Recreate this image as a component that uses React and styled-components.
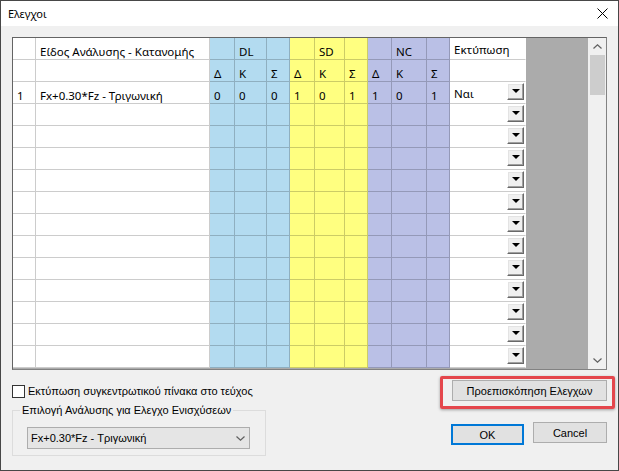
import React from "react";
import styled, { createGlobalStyle } from "styled-components";

const GlobalStyle = createGlobalStyle`
  * { box-sizing: border-box; }
  html, body { margin: 0; padding: 0; background: #f0f0f0; }
  body { font-family: "Liberation Sans", Arial, sans-serif; }
`;

const BLUE = "#b3dbf0";
const YELLOW = "#ffff80";
const LAV = "#bac0e6";
const WHITE = "#ffffff";

const columns = [
  { w: 23, bg: WHITE },
  { w: 174, bg: WHITE },
  { w: 25, bg: BLUE },
  { w: 32, bg: BLUE },
  { w: 23, bg: BLUE },
  { w: 25, bg: YELLOW },
  { w: 30, bg: YELLOW },
  { w: 23, bg: YELLOW },
  { w: 24, bg: LAV },
  { w: 35, bg: LAV },
  { w: 23, bg: LAV },
  { w: 76, bg: WHITE },
];

const header1 = ["", "Είδος Ανάλυσης - Κατανομής", "", "DL", "", "", "SD", "", "", "NC", "", "Εκτύπωση"];
const header2 = ["", "", "Δ", "Κ", "Σ", "Δ", "Κ", "Σ", "Δ", "Κ", "Σ", ""];

const dataRows = [
  { n: "1", name: "Fx+0.30*Fz - Τριγωνική", vals: ["0", "0", "0", "1", "0", "1", "1", "0", "1"], print: "Ναι" },
  ...Array.from({ length: 12 }, () => ({ n: "", name: "", vals: Array(9).fill(""), print: "" })),
];

const Dialog = styled.div`
  width: 619px;
  height: 471px;
  border: 1px solid #474747;
  background: #f0f0f0;
  display: flex;
  flex-direction: column;
  overflow: hidden;
`;

const TitleBar = styled.div`
  height: 25px;
  flex: none;
  background: #ffffff;
  display: flex;
  align-items: center;
  justify-content: space-between;
  padding: 0 10px 0 7px;
`;

const Title = styled.span`
  font-family: "Noto Sans", "Open Sans", sans-serif;
  font-size: 11px;
  letter-spacing: -0.1px;
  color: #000;
`;

const CloseIcon = styled.svg`
  width: 11px;
  height: 11px;
  display: block;
`;

const Body = styled.div`
  flex: 1;
  display: flex;
  flex-direction: column;
  padding: 11px 11px 0 11px;
`;

const GridFrame = styled.div`
  height: 333px;
  flex: none;
  display: flex;
  border: 1px solid #828282;
  border-top-color: #646464;
  border-left-color: #646464;
  background: #ababab;
`;

const Table = styled.div`
  width: 513px;
  align-self: flex-start;
  display: grid;
  grid-template-columns: ${(p) => p.$cols};
  grid-auto-rows: 22px;
  font-family: "Noto Sans", "Open Sans", sans-serif;
  font-size: 11.5px;
  color: #000;
`;

const Cell = styled.div`
  background: ${(p) => p.$bg};
  border-right: 1px solid rgba(0, 0, 0, 0.2);
  border-bottom: 1px solid rgba(0, 0, 0, 0.2);
  border-right-color: ${(p) => (p.$last ? "transparent" : "rgba(0, 0, 0, 0.2)")};
  display: flex;
  align-items: center;
  padding: 5px 0 0 4px;
  white-space: nowrap;
  overflow: hidden;
`;

const PrintCell = styled(Cell)`
  justify-content: space-between;
  align-items: flex-start;
  padding: 0 1px 0 4px;
`;

const PrintText = styled.span`
  margin-top: 4px;
  line-height: 16px;
`;

const DropButton = styled.div`
  width: 17px;
  height: 17px;
  margin-top: 1px;
  background: #f0f0f0;
  border-top: 1px solid #ffffff;
  border-left: 1px solid #ffffff;
  border-right: 1px solid #696969;
  border-bottom: 1px solid #696969;
  box-shadow: inset -1px -1px 0 #a0a0a0, inset 1px 1px 0 #e3e3e3;
  display: flex;
  align-items: center;
  justify-content: center;
  padding-bottom: 1px;
`;

const Triangle = styled.div`
  width: 0;
  height: 0;
  border-left: 4px solid transparent;
  border-right: 4px solid transparent;
  border-top: 4px solid #000;
`;

const Workspace = styled.div`
  flex: 1;
  background: #ababab;
`;

const VScroll = styled.div`
  width: 18px;
  flex: none;
  background: #f0f0f0;
  display: flex;
  flex-direction: column;
`;

const ScrollArrow = styled.div`
  height: 17px;
  flex: none;
  display: flex;
  align-items: center;
  justify-content: center;
`;

const Track = styled.div`
  flex: 1;
  display: flex;
  flex-direction: column;
`;

const Thumb = styled.div`
  height: 40px;
  margin: 0 1px 0 2px;
  background: #cdcdcd;
`;

const Footer = styled.div`
  display: flex;
  justify-content: space-between;
  align-items: flex-start;
  font-family: "Liberation Sans", Arial, sans-serif;
  font-size: 11px;
  color: #000;
`;

const LeftCol = styled.div`
  width: 254px;
  display: flex;
  flex-direction: column;
`;

const CheckRow = styled.label`
  display: flex;
  align-items: center;
  margin-top: 15px;
  height: 13px;
`;

const CheckBox = styled.span`
  width: 13px;
  height: 13px;
  border: 1px solid #333333;
  background: #ffffff;
  flex: none;
`;

const CheckLabel = styled.span`
  margin-left: 3px;
  line-height: 13px;
`;

const Group = styled.fieldset`
  margin: 6px 0 0 0;
  padding: 0 15px 6px 14px;
  border: 1px solid #dcdcdc;
  min-width: 0;
`;

const Legend = styled.legend`
  padding: 0 2px;
  margin-left: -7px;
  line-height: 13px;
  font-size: 11px;
`;

const Combo = styled.div`
  margin-top: 10px;
  height: 22px;
  width: 100%;
  border: 1px solid #adadad;
  background: #e5e5e5;
  display: flex;
  align-items: center;
  justify-content: space-between;
  padding: 0 4px 0 3px;
`;

const RightCol = styled.div`
  width: 156px;
  display: flex;
  flex-direction: column;
  align-items: flex-end;
`;

const Highlight = styled.div`
  position: relative;
  margin-top: 10px;
`;

const RedMark = styled.div`
  position: absolute;
  left: -12px;
  top: -4px;
  right: -8px;
  bottom: -8px;
  border: 3px solid #e4464c;
  border-radius: 2px;
  box-shadow: 0 1px 3px rgba(0, 0, 0, 0.35);
  pointer-events: none;
`;

const Button = styled.div`
  width: ${(p) => p.$w}px;
  height: 21px;
  margin-top: ${(p) => p.$mt || 0}px;
  background: #e1e1e1;
  border: ${(p) => (p.$primary ? "2px solid #0078d7" : "1px solid #adadad")};
  display: flex;
  align-items: center;
  justify-content: center;
  font-family: "Liberation Sans", Arial, sans-serif;
  font-size: 11px;
  color: #000;
`;

const ButtonRow = styled.div`
  display: flex;
  align-items: flex-start;
  gap: 9px;
  margin-top: 21px;
`;

const Chevron = ({ up }) => (
  <svg width="9" height="5" viewBox="0 0 9 5" style={{ display: "block" }}>
    <polyline
      points={up ? "0.5,4.5 4.5,0.8 8.5,4.5" : "0.5,0.5 4.5,4.2 8.5,0.5"}
      fill="none"
      stroke="#606060"
      strokeWidth="1.2"
    />
  </svg>
);

const renderRow = (cells, key, withDrop) =>
  cells.map((txt, i) => {
    const col = columns[i];
    if (i === columns.length - 1) {
      return (
        <PrintCell key={`${key}-${i}`} $bg={col.bg} $last>
          <PrintText>{txt}</PrintText>
          {withDrop && (
            <DropButton>
              <Triangle />
            </DropButton>
          )}
        </PrintCell>
      );
    }
    return (
      <Cell key={`${key}-${i}`} $bg={col.bg}>
        {txt}
      </Cell>
    );
  });

export default function App() {
  const cols = columns.map((c) => `${c.w}px`).join(" ");
  return (
    <>
      <GlobalStyle />
      <Dialog>
        <TitleBar>
          <Title>Ελεγχοι</Title>
          <CloseIcon viewBox="0 0 11 11">
            <path d="M0.5 0.5 L10.5 10.5 M10.5 0.5 L0.5 10.5" stroke="#000" strokeWidth="1" fill="none" />
          </CloseIcon>
        </TitleBar>
        <Body>
          <GridFrame>
            <Table $cols={cols}>
              {renderRow(header1, "h1", false)}
              {renderRow(header2, "h2", false)}
              {dataRows.map((r, ri) =>
                renderRow([r.n, r.name, ...r.vals, r.print], `r${ri}`, true)
              )}
            </Table>
            <Workspace />
            <VScroll>
              <ScrollArrow>
                <Chevron up />
              </ScrollArrow>
              <Track>
                <Thumb />
              </Track>
              <ScrollArrow>
                <Chevron />
              </ScrollArrow>
            </VScroll>
          </GridFrame>
          <Footer>
            <LeftCol>
              <CheckRow>
                <CheckBox />
                <CheckLabel>Εκτύπωση συγκεντρωτικού πίνακα στο τεύχος</CheckLabel>
              </CheckRow>
              <Group>
                <Legend>Επιλογή Ανάλυσης για Ελεγχο Ενισχύσεων</Legend>
                <Combo>
                  <span>Fx+0.30*Fz - Τριγωνική</span>
                  <Chevron />
                </Combo>
              </Group>
            </LeftCol>
            <RightCol>
              <Highlight>
                <Button $w={155}>Προεπισκόπηση Ελεγχων</Button>
                <RedMark />
              </Highlight>
              <ButtonRow>
                <Button $w={73} $mt={2} $primary>
                  OK
                </Button>
                <Button $w={74}>Cancel</Button>
              </ButtonRow>
            </RightCol>
          </Footer>
        </Body>
      </Dialog>
    </>
  );
}
